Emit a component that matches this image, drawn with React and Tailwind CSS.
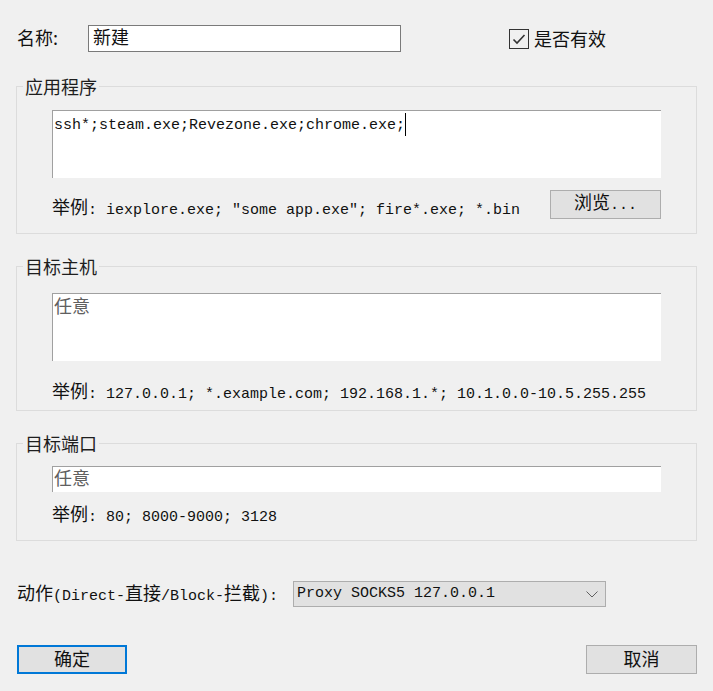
import React from "react";

const CJK = "font-['Noto_Sans_CJK_SC',sans-serif] text-[18px]";
const MONO = "font-['Liberation_Mono','Noto_Sans_CJK_SC',monospace] text-[15px]";

function C({ children, className = "" }) {
  return <span className={`${CJK} ${className}`}>{children}</span>;
}
function M({ children, className = "" }) {
  return <span className={`${MONO} whitespace-pre ${className}`}>{children}</span>;
}

function Legend({ children }) {
  return (
    <legend className={`ml-[-29px] px-[2px] leading-[24px] text-[#1e1e1e] ${CJK}`}>
      {children}
    </legend>
  );
}

export default function App() {
  return (
    <div className="w-[713px] h-[691px] bg-[#f0f0f0] px-[16px] pt-[25px] flex flex-col text-[#111]">
      {/* name row */}
      <div className="flex items-center h-[27px]">
        <div className="w-[72px] pl-[1px] h-[24px] leading-[20px]">
          <C>名称:</C>
        </div>
        <div className="w-[313px] h-[27px] bg-white border border-[#7a7a7a] pl-[4px] leading-[20px]">
          <C>新建</C>
        </div>
        <div className="ml-[108px] flex items-center">
          <div className="w-[20px] h-[20px] border border-[#333] bg-[#f0f0f0] flex items-center justify-center">
            <svg width="16" height="16" viewBox="0 0 16 16">
              <polyline points="2.5,8.5 6,12 13.5,4" fill="none" stroke="#333" strokeWidth="1.6" />
            </svg>
          </div>
          <div className="ml-[5px] h-[22px] leading-[20px]">
            <C>是否有效</C>
          </div>
        </div>
      </div>

      {/* group 1 */}
      <fieldset className="mt-[22px] border border-[#dcdcdc] px-[35px] pt-[12px] pb-[14px]">
        <Legend>应用程序</Legend>
        <div className="h-[68px] bg-white border-t border-l border-[#a0a0a0] pl-[1px] pt-[1px] leading-[22px]">
          <M>ssh*;steam.exe;Revezone.exe;chrome.exe;</M>
          <span className="inline-block w-[1px] h-[23px] bg-black align-middle"></span>
        </div>
        <div className="mt-[12px] flex items-end justify-between">
          <div className="mb-[4px] h-[18px] leading-[18px] whitespace-nowrap">
            <C>举例</C>
            <M>{': iexplore.exe; "some app.exe"; fire*.exe; *.bin'}</M>
          </div>
          <div className="w-[111px] h-[29px] bg-[#e1e1e1] border border-[#adadad] flex items-center justify-center">
            <span className="leading-[20px] mb-[2px]">
              <C>浏览</C>
              <M>...</M>
            </span>
          </div>
        </div>
      </fieldset>

      {/* group 2 */}
      <fieldset className="mt-[20px] border border-[#dcdcdc] px-[35px] pt-[15px] pb-[11px]">
        <Legend>目标主机</Legend>
        <div className="h-[68px] bg-white border-t border-l border-[#a0a0a0] pl-[1px] leading-[22px]">
          <C className="text-[#606060]">任意</C>
        </div>
        <div className="mt-[20px] h-[18px] leading-[18px] whitespace-nowrap">
          <C>举例</C>
          <M>{": 127.0.0.1; *.example.com; 192.168.1.*; 10.1.0.0-10.5.255.255"}</M>
        </div>
      </fieldset>

      {/* group 3 */}
      <fieldset className="mt-[20px] border border-[#dcdcdc] px-[35px] pt-[11px] pb-[18px]">
        <Legend>目标端口</Legend>
        <div className="h-[26px] bg-white border-t border-l border-[#a0a0a0] pl-[1px] leading-[20px]">
          <C className="text-[#606060]">任意</C>
        </div>
        <div className="mt-[12px] h-[18px] leading-[18px] whitespace-nowrap">
          <C>举例</C>
          <M>{": 80; 8000-9000; 3128"}</M>
        </div>
      </fieldset>

      {/* action row */}
      <div className="mt-[40px] flex items-center h-[26px]">
        <div className="w-[277px] pl-[1px] h-[24px] leading-[20px] whitespace-nowrap">
          <C>动作</C>
          <M>(Direct-</M>
          <C>直接</C>
          <M>/Block-</M>
          <C>拦截</C>
          <M>):</M>
        </div>
        <div className="w-[313px] h-[26px] bg-[#e1e1e1] border border-[#adadad] pl-[3px] pr-[7px] flex items-center justify-between">
          <M className="leading-[22px]">Proxy SOCKS5 127.0.0.1</M>
          <svg width="12" height="7" viewBox="0 0 12 7">
            <polyline points="0.5,0.5 6,6 11.5,0.5" fill="none" stroke="#606060" strokeWidth="1" />
          </svg>
        </div>
      </div>

      {/* buttons */}
      <div className="mt-[38px] flex justify-between">
        <div className="ml-[1px] w-[110px] h-[29px] bg-[#e1e1e1] border-2 border-[#0078d7] flex items-center justify-center">
          <span className="leading-[20px] mb-[2px]">
            <C>确定</C>
          </span>
        </div>
        <div className="w-[111px] h-[29px] bg-[#e1e1e1] border border-[#adadad] flex items-center justify-center">
          <span className="leading-[20px] mb-[2px]">
            <C>取消</C>
          </span>
        </div>
      </div>
    </div>
  );
}
